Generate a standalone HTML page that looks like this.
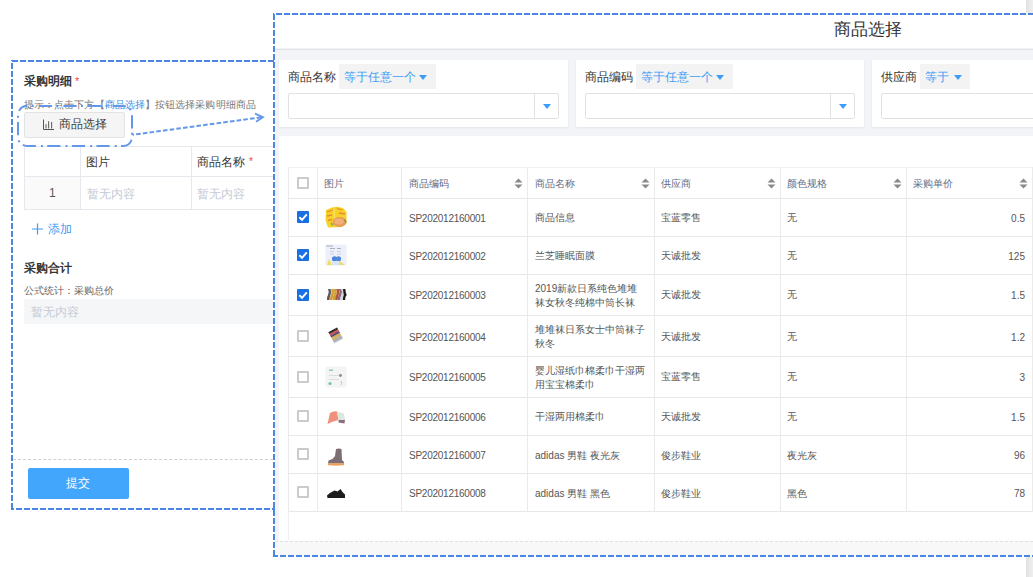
<!DOCTYPE html>
<html><head><meta charset="utf-8">
<style>
*{margin:0;padding:0;box-sizing:border-box}
html,body{width:1033px;height:577px;overflow:hidden;background:#fff;font-family:"Liberation Sans",sans-serif;color:#333}
.a{position:absolute}
.t{position:absolute;white-space:nowrap;line-height:1}
.card{position:absolute;top:60px;height:67px;background:#fff;box-shadow:0 1px 2px rgba(40,40,90,.07)}
.inp{position:absolute;top:93px;height:26px;background:#fff;border:1px solid #e2e2e2;border-radius:2px}
.dd{position:absolute;top:64px;height:25px;background:#f3f3f3}
.lbl{position:absolute;top:71px;font-size:12px;color:#333;white-space:nowrap;line-height:1}
.ddt{position:absolute;top:8px;left:5px;font-size:11.5px;color:#3d9df6;white-space:nowrap;line-height:1}
.caret{position:absolute;width:0;height:0;border-left:4.5px solid transparent;border-right:4.5px solid transparent;border-top:5px solid #3d9df6}
.th{position:absolute;font-size:10px;color:#5f6c84;white-space:nowrap;line-height:1}
.td{position:absolute;font-size:10px;color:#555;white-space:nowrap;line-height:1}
.code{letter-spacing:-0.25px}
.cb{position:absolute;width:12px;height:12px;border:2px solid #cbcbcb;border-radius:1px;background:#fff}
.cbk{position:absolute;width:12px;height:12px;background:#1a6fe2;border-radius:1px}
</style></head><body>
<svg width="0" height="0" style="position:absolute"><defs><filter id="bl" x="-10%" y="-10%" width="120%" height="120%"><feGaussianBlur stdDeviation="0.4"/></filter></defs></svg>

<div class="t" style="left:24px;top:76px;font-size:11.5px;font-weight:bold;color:#333">采购明细</div>
<div class="t" style="left:75px;top:76px;font-size:11px;color:#e5484d">*</div>
<div class="t" style="left:24px;top:100px;font-size:10px;color:#777;letter-spacing:0.08px">提示：点击下方【<span style="color:#3f8fe8">商品选择</span>】按钮选择采购明细商品</div>
<div class="a" style="left:24px;top:112px;width:101px;height:26px;background:#f5f5f5;border:1px solid #e3e3e3;border-radius:2px"></div>
<svg class="a" style="left:43px;top:119px" width="12" height="12"><path d="M0.5 0.5 V10.5 H11" fill="none" stroke="#555" stroke-width="1"/><path d="M3 5.3 V9.5 M5.6 2.3 V9.5 M8.6 3 V9.5" stroke="#666" stroke-width="1.1"/></svg>
<div class="t" style="left:59px;top:118px;font-size:12px;color:#3c3c3c">商品选择</div>
<div class="a" style="left:25px;top:177px;width:55px;height:32px;background:#fafafa"></div>
<div class="a" style="left:24px;top:146px;width:249px;height:1px;background:#e6e8ee"></div>
<div class="a" style="left:24px;top:176px;width:249px;height:1px;background:#e6e8ee"></div>
<div class="a" style="left:24px;top:209px;width:249px;height:1px;background:#e6e8ee"></div>
<div class="a" style="left:24px;top:146px;width:1px;height:64px;background:#e6e8ee"></div>
<div class="a" style="left:80px;top:146px;width:1px;height:64px;background:#e6e8ee"></div>
<div class="a" style="left:191px;top:146px;width:1px;height:64px;background:#e6e8ee"></div>
<div class="t" style="left:86px;top:156px;font-size:12px;color:#3a3a3a">图片</div>
<div class="t" style="left:197px;top:156px;font-size:12px;color:#333">商品名称</div>
<div class="t" style="left:249px;top:157px;font-size:10px;color:#e5484d">*</div>
<div class="t" style="left:49px;top:187px;font-size:12px;color:#555">1</div>
<div class="t" style="left:87px;top:188px;font-size:12px;color:#c5cad3">暂无内容</div>
<div class="t" style="left:197px;top:188px;font-size:12px;color:#c5cad3">暂无内容</div>
<svg class="a" style="left:32px;top:223px" width="12" height="12"><path d="M0 6 H11 M5.5 0.5 V11.5" stroke="#3f9bf5" stroke-width="1.2"/></svg>
<div class="t" style="left:48px;top:223px;font-size:12px;color:#3f9bf5">添加</div>
<div class="t" style="left:24px;top:263px;font-size:11.5px;font-weight:bold;color:#333">采购合计</div>
<div class="t" style="left:24px;top:286px;font-size:10px;color:#666">公式统计：采购总价</div>
<div class="a" style="left:24px;top:299px;width:249px;height:25px;background:#f5f6f8"></div>
<div class="t" style="left:31px;top:306px;font-size:12px;color:#c5cad3">暂无内容</div>
<div class="a" style="left:13px;top:459px;width:260px;height:1px;border-top:1px dashed #cfcfcf"></div>
<div class="a" style="left:28px;top:468px;width:101px;height:31px;background:#42a6fd;border-radius:2px"></div>
<div class="t" style="left:66px;top:477px;font-size:12px;color:#fff">提交</div>
<div class="a" style="left:275px;top:48px;width:758px;height:493px;background:#f3f4f8"></div>
<div class="a" style="left:275px;top:49px;width:758px;height:1px;background:#e1e2e6"></div>
<div class="t" style="left:834px;top:21px;font-size:17px;color:#333">商品选择</div>
<div class="a" style="left:279px;top:136px;width:754px;height:405px;background:#fff"></div>
<div class="a" style="left:275px;top:541px;width:758px;height:15px;background:#f8f8f8"></div>
<div class="a" style="left:275px;top:541px;width:758px;height:1px;border-top:1px dashed #e0e0e0"></div>
<div class="card" style="left:279px;width:289px"></div>
<div class="card" style="left:576px;width:288px"></div>
<div class="card" style="left:872px;width:289px"></div>
<div class="lbl" style="left:288px">商品名称</div>
<div class="dd" style="left:339px;width:97px"><div class="ddt">等于任意一个</div><div class="caret" style="left:80px;top:11px"></div></div>
<div class="inp" style="left:288px;width:271px"><div class="a" style="left:245px;top:0;width:1px;height:24px;background:#e2e2e2"></div><div class="caret" style="left:254px;top:10px"></div></div>
<div class="lbl" style="left:585px">商品编码</div>
<div class="dd" style="left:636px;width:97px"><div class="ddt">等于任意一个</div><div class="caret" style="left:80px;top:11px"></div></div>
<div class="inp" style="left:585px;width:270px"><div class="a" style="left:244px;top:0;width:1px;height:24px;background:#e2e2e2"></div><div class="caret" style="left:253px;top:10px"></div></div>
<div class="lbl" style="left:881px">供应商</div>
<div class="dd" style="left:920px;width:50px"><div class="ddt">等于</div><div class="caret" style="left:34px;top:11px"></div></div>
<div class="inp" style="left:881px;width:300px"></div>
<div class="a" style="left:1026px;top:0;width:7px;height:13px;background:linear-gradient(90deg,#e2e2e2,#efefef)"></div>
<div class="a" style="left:1026px;top:557px;width:7px;height:20px;background:linear-gradient(90deg,#e2e2e2,#efefef)"></div>
<div class="a" style="left:288px;top:167px;width:745px;height:1px;background:#f2f2f2"></div>
<div class="a" style="left:288px;top:198px;width:745px;height:1px;background:#e8e8e8"></div>
<div class="a" style="left:288px;top:236px;width:745px;height:1px;background:#e8e8e8"></div>
<div class="a" style="left:288px;top:274px;width:745px;height:1px;background:#e8e8e8"></div>
<div class="a" style="left:288px;top:315px;width:745px;height:1px;background:#e8e8e8"></div>
<div class="a" style="left:288px;top:356px;width:745px;height:1px;background:#e8e8e8"></div>
<div class="a" style="left:288px;top:397px;width:745px;height:1px;background:#e8e8e8"></div>
<div class="a" style="left:288px;top:435px;width:745px;height:1px;background:#e8e8e8"></div>
<div class="a" style="left:288px;top:473px;width:745px;height:1px;background:#e8e8e8"></div>
<div class="a" style="left:288px;top:511px;width:745px;height:1px;background:#e8e8e8"></div>
<div class="a" style="left:288px;top:167px;width:1px;height:345px;background:#ebebeb"></div>
<div class="a" style="left:317px;top:167px;width:1px;height:345px;background:#ebebeb"></div>
<div class="a" style="left:401px;top:167px;width:1px;height:345px;background:#ebebeb"></div>
<div class="a" style="left:527px;top:167px;width:1px;height:345px;background:#ebebeb"></div>
<div class="a" style="left:654px;top:167px;width:1px;height:345px;background:#ebebeb"></div>
<div class="a" style="left:780px;top:167px;width:1px;height:345px;background:#ebebeb"></div>
<div class="a" style="left:906px;top:167px;width:1px;height:345px;background:#ebebeb"></div>
<div class="a" style="left:1032px;top:167px;width:1px;height:345px;background:#ebebeb"></div>
<div class="a" style="left:288px;top:511px;width:1px;height:30px;background:#f0f0f0"></div>
<div class="cb" style="left:297px;top:177px"></div>
<div class="th" style="left:324px;top:179px">图片</div>
<div class="th" style="left:409px;top:179px">商品编码</div>
<div class="th" style="left:535px;top:179px">商品名称</div>
<div class="th" style="left:661px;top:179px">供应商</div>
<div class="th" style="left:787px;top:179px">颜色规格</div>
<div class="th" style="left:913px;top:179px">采购单价</div>
<svg class="a" style="left:514px;top:178px" width="9" height="11"><path d="M0.5 4.5 L4.5 0.5 L8.5 4.5Z M0.5 6.5 L4.5 10.5 L8.5 6.5Z" fill="#8a8a8a"/></svg>
<svg class="a" style="left:641px;top:178px" width="9" height="11"><path d="M0.5 4.5 L4.5 0.5 L8.5 4.5Z M0.5 6.5 L4.5 10.5 L8.5 6.5Z" fill="#8a8a8a"/></svg>
<svg class="a" style="left:767px;top:178px" width="9" height="11"><path d="M0.5 4.5 L4.5 0.5 L8.5 4.5Z M0.5 6.5 L4.5 10.5 L8.5 6.5Z" fill="#8a8a8a"/></svg>
<svg class="a" style="left:893px;top:178px" width="9" height="11"><path d="M0.5 4.5 L4.5 0.5 L8.5 4.5Z M0.5 6.5 L4.5 10.5 L8.5 6.5Z" fill="#8a8a8a"/></svg>
<svg class="a" style="left:1019px;top:178px" width="9" height="11"><path d="M0.5 4.5 L4.5 0.5 L8.5 4.5Z M0.5 6.5 L4.5 10.5 L8.5 6.5Z" fill="#8a8a8a"/></svg>
<div class="cbk" style="left:297px;top:211px"><svg width="12" height="12" style="position:absolute;left:0;top:0"><path d="M2.3 6.3 L5 8.8 L9.8 3.4" fill="none" stroke="#fff" stroke-width="1.9"/></svg></div>
<svg class="a" style="left:325px;top:206px" width="22" height="22"><g filter="url(#bl)"><path d="M1 4 L7 1.5 L12 0.8 L18 2 L21.5 6 L21.5 17 L17 21 L3 21.5 L0.5 14Z" fill="#f6d226"/><path d="M2 6 L8 4 M12 2.5 L17 4 M2 10 L7 9 M14 7 L20 8 M3 14.5 L7 13.5" stroke="#e98a3a" stroke-width="1.3"/><path d="M9 3 L10 20" stroke="#fbe46a" stroke-width="1.2"/><ellipse cx="14.5" cy="16" rx="7" ry="5" fill="#ea9a5a"/><ellipse cx="14" cy="15.4" rx="4.8" ry="3" fill="#f0b07a"/><path d="M19.5 13.5 L21 16.5" stroke="#6b9a3a" stroke-width="1.3"/><path d="M6 17 L8 19.5" stroke="#7ab048" stroke-width="1.5"/></g></svg>
<div class="td code" style="left:409px;top:214px">SP202012160001</div>
<div class="td" style="left:535px;top:213px">商品信息</div>
<div class="td" style="left:661px;top:213px">宝蓝零售</div>
<div class="td" style="left:787px;top:213px">无</div>
<div class="td" style="right:8px;top:214px;text-align:right">0.5</div>
<div class="cbk" style="left:297px;top:249px"><svg width="12" height="12" style="position:absolute;left:0;top:0"><path d="M2.3 6.3 L5 8.8 L9.8 3.4" fill="none" stroke="#fff" stroke-width="1.9"/></svg></div>
<svg class="a" style="left:325px;top:244px" width="22" height="22"><g filter="url(#bl)"><rect x="0.5" y="0.5" width="21" height="21" rx="1.5" fill="#edf0fb"/><path d="M1 2 H8 M5 4.5 H10 M12 4.5 H16" stroke="#8a94a8" stroke-width="0.7"/><path d="M5 7.5 H9 M12 7.5 H16 M5 10 H9 M12 10 H16" stroke="#b4bccb" stroke-width="0.6"/><circle cx="9.5" cy="14.8" r="2.6" fill="#4a86da"/><circle cx="13.5" cy="14.8" r="2.6" fill="#4f8adb"/><path d="M2 21 L4 15 L7 21Z" fill="#f3dc55"/><path d="M13 21 L15 17 L20 21Z" fill="#eedc70"/><rect x="7" y="17" width="7" height="4" fill="#d6e6f8"/></g></svg>
<div class="td code" style="left:409px;top:252px">SP202012160002</div>
<div class="td" style="left:535px;top:251px">兰芝睡眠面膜</div>
<div class="td" style="left:661px;top:251px">天诚批发</div>
<div class="td" style="left:787px;top:251px">无</div>
<div class="td" style="right:8px;top:252px;text-align:right">125</div>
<div class="cbk" style="left:297px;top:289px"><svg width="12" height="12" style="position:absolute;left:0;top:0"><path d="M2.3 6.3 L5 8.8 L9.8 3.4" fill="none" stroke="#fff" stroke-width="1.9"/></svg></div>
<svg class="a" style="left:325px;top:284px" width="22" height="22"><g filter="url(#bl)"><path d="M3 5 q1.5 3 0 6 q-1.5 2 -1 5 h2.5 q0 -3 1 -5 q1.5 -3 0 -6z" fill="#5a5a5a"/><path d="M6 5 q1.5 3 0 6 q-1.5 2 -1 5 h2.5 q0 -3 1 -5 q1.5 -3 0 -6z" fill="#d9963a"/><path d="M8.6 5 q1.5 3 0 6 q-1.5 2 -1 5 h2.5 q0 -3 1 -5 q1.5 -3 0 -6z" fill="#c9a632"/><path d="M11.2 5 q1.5 3 0 6 q-1.5 2 -1 5 h2.5 q0 -3 1 -5 q1.5 -3 0 -6z" fill="#b5572e"/><path d="M13.8 5 q1.5 3 0 6 q-1.5 2 -1 5 h2.5 q0 -3 1 -5 q1.5 -3 0 -6z" fill="#8c6a88"/><path d="M16.4 5 q1.5 3 0 6 q-1.5 2 -1 5 h2.2 q0 -3 1 -5 q1.5 -3 0 -6z" fill="#d6d6d6"/><path d="M18 5 h2.4 q0 3 1.3 6 q-2 2 -1.6 5 h-2.3 q0 -3 1 -5 q-0.5 -3 -0.8 -6z" fill="#1e1e1e"/></g></svg>
<div class="td code" style="left:409px;top:291px">SP202012160003</div>
<div class="td" style="left:535px;top:282px;line-height:14px">2019新款日系纯色堆堆<br>袜女秋冬纯棉中筒长袜</div>
<div class="td" style="left:661px;top:290px">天诚批发</div>
<div class="td" style="left:787px;top:290px">无</div>
<div class="td" style="right:8px;top:291px;text-align:right">1.5</div>
<div class="cb" style="left:297px;top:330px"></div>
<svg class="a" style="left:325px;top:324px" width="22" height="22"><g filter="url(#bl)" transform="rotate(-28 11 12)"><rect x="6" y="5" width="10" height="2.2" fill="#2a2a2a"/><rect x="6" y="7.2" width="10" height="2" fill="#d04848"/><rect x="6" y="9.2" width="10" height="2" fill="#2e4a80"/><rect x="6" y="11.2" width="10" height="2.6" fill="#dba94a"/><rect x="6" y="13.8" width="10" height="3.6" fill="#b0b0b0"/></g></svg>
<div class="td code" style="left:409px;top:333px">SP202012160004</div>
<div class="td" style="left:535px;top:323px;line-height:14px">堆堆袜日系女士中筒袜子<br>秋冬</div>
<div class="td" style="left:661px;top:332px">天诚批发</div>
<div class="td" style="left:787px;top:332px">无</div>
<div class="td" style="right:8px;top:333px;text-align:right">1.2</div>
<div class="cb" style="left:297px;top:371px"></div>
<svg class="a" style="left:325px;top:366px" width="22" height="22"><g filter="url(#bl)"><rect x="0.5" y="0.5" width="21" height="21" rx="2" fill="#f3f4f3"/><rect x="4" y="3.5" width="4" height="1.5" fill="#8ccfb8"/><path d="M4 9.5 H15 M4 13.5 H14" stroke="#d2d2d2" stroke-width="0.7"/><circle cx="15.5" cy="9.5" r="1.4" fill="#8a8a8a"/><path d="M16 15 q2 2 0 4" stroke="#bbb" stroke-width="0.8" fill="none"/><circle cx="5" cy="17.5" r="1.6" fill="#74c4ab"/></g></svg>
<div class="td code" style="left:409px;top:373px">SP202012160005</div>
<div class="td" style="left:535px;top:364px;line-height:14px">婴儿湿纸巾棉柔巾干湿两<br>用宝宝棉柔巾</div>
<div class="td" style="left:661px;top:372px">宝蓝零售</div>
<div class="td" style="left:787px;top:372px">无</div>
<div class="td" style="right:8px;top:373px;text-align:right">3</div>
<div class="cb" style="left:297px;top:410px"></div>
<svg class="a" style="left:325px;top:404px" width="22" height="22"><g filter="url(#bl)"><path d="M2.5 20 L5 9 Q9 6.5 12 7.5 L13.5 16 Q8.5 17 2.5 20Z" fill="#f2907e"/><path d="M12 7.5 L19 9.5 L20 16 L13.5 16Z" fill="#dbe8dc"/><path d="M13.5 16 L20 16 L19.5 19.5 L13.5 18.5Z" fill="#8d6e7c"/></g></svg>
<div class="td code" style="left:409px;top:413px">SP202012160006</div>
<div class="td" style="left:535px;top:412px">干湿两用棉柔巾</div>
<div class="td" style="left:661px;top:412px">天诚批发</div>
<div class="td" style="left:787px;top:412px">无</div>
<div class="td" style="right:8px;top:413px;text-align:right">1.5</div>
<div class="cb" style="left:297px;top:448px"></div>
<svg class="a" style="left:325px;top:446px" width="22" height="22"><g filter="url(#bl)"><path d="M11 3 Q14 2 16.5 3 L17 14 L19 16 L19 17.5 L3 17.5 L3.5 14.5 Q8 13.5 10 10Z" fill="#7d6e74"/><path d="M3 17.3 H19 V19.3 Q11 20 3 19.3Z" fill="#eaa25a"/></g></svg>
<div class="td code" style="left:409px;top:451px">SP202012160007</div>
<div class="td" style="left:535px;top:451px">adidas 男鞋 夜光灰</div>
<div class="td" style="left:661px;top:451px">俊步鞋业</div>
<div class="td" style="left:787px;top:451px">夜光灰</div>
<div class="td" style="right:8px;top:451px;text-align:right">96</div>
<div class="cb" style="left:297px;top:486px"></div>
<svg class="a" style="left:325px;top:481px" width="22" height="22"><g filter="url(#bl)"><path d="M2 14.5 Q5 11.5 9.5 9.5 L12.5 10.5 L15.5 8 L17.5 11 L20 13.5 L20 17 L2.5 17Z" fill="#1c1c1c"/></g></svg>
<div class="td code" style="left:409px;top:489px">SP202012160008</div>
<div class="td" style="left:535px;top:489px">adidas 男鞋 黑色</div>
<div class="td" style="left:661px;top:489px">俊步鞋业</div>
<div class="td" style="left:787px;top:489px">黑色</div>
<div class="td" style="right:8px;top:489px;text-align:right">78</div>
<svg class="a" style="left:0;top:0" width="1033" height="577">
  <g fill="none" stroke="#4a87e2" stroke-width="2" stroke-dasharray="6 2">
    <path d="M273 14 H1040" stroke-dashoffset="5"/>
    <path d="M274 13 V557" stroke-dashoffset="7"/>
    <path d="M273 556 H1040" stroke-dashoffset="1"/>
    <path d="M11 61 H275" stroke-dashoffset="7"/>
    <path d="M12 60 V510" stroke-dashoffset="5"/>
    <path d="M11 509 H275" stroke-dashoffset="3"/>
  </g>
  <g fill="none" stroke="#6398e8" stroke-width="2">
    <rect x="18" y="106" width="114" height="40" rx="9" ry="9" stroke-dasharray="13.2 4.3 2 5.1" stroke-dashoffset="12.76"/>
    <path d="M132.5 134.8 L262 117.2" stroke-dasharray="4.6 2.16" stroke-dashoffset="3.1"/>
    <path d="M255 113.6 L263 117.2 L256 121.8" stroke-width="1.8"/>
  </g>
</svg>
</body></html>
